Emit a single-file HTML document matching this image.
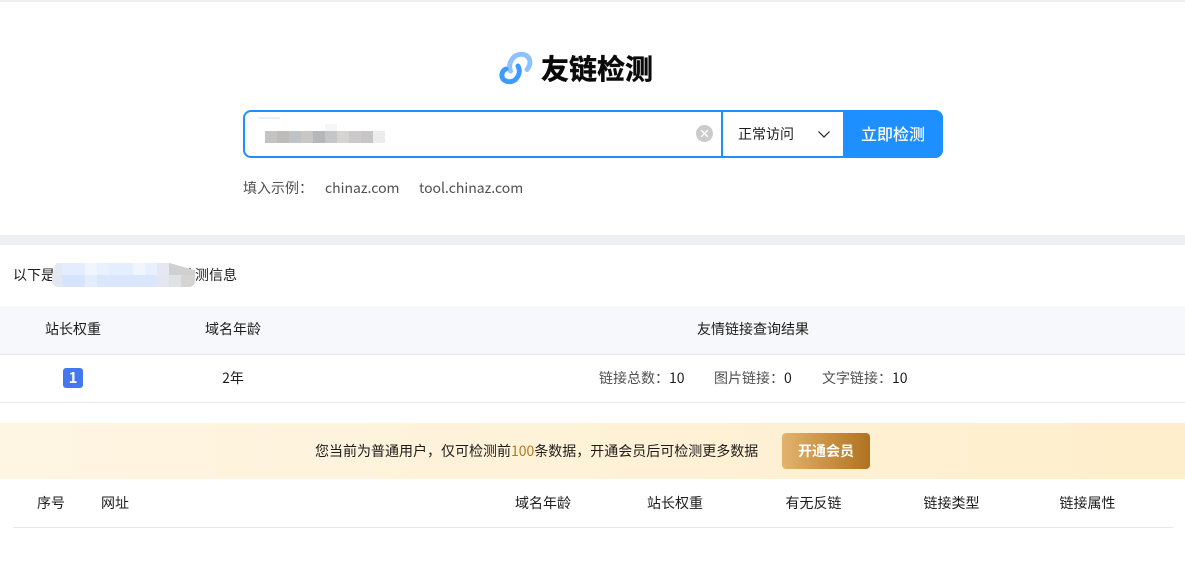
<!DOCTYPE html>
<html lang="zh"><head><meta charset="utf-8"><style>
*{box-sizing:border-box}
html,body{margin:0;padding:0;background:#fff}
body{width:1185px;height:567px;position:relative;overflow:hidden;font-family:"Noto Sans CJK SC","Liberation Sans",sans-serif;font-size:14px;color:#1c1c1c}
.a{position:absolute;white-space:nowrap;line-height:20px}
.c{transform:translateX(-50%)}
.g{color:#505050}
</style></head><body>
<div class="a" style="left:0;top:0;width:1185px;height:2px;background:#eef0f3"></div>

<svg class="a" style="left:498px;top:51px" width="36" height="34" viewBox="0 0 36 34" fill="none" stroke-linecap="round">
<path d="M12.5 20 C10.5 15 12 10 16 6 C20 2.5 26 2.5 29.5 5.5 C33 9 32.500 14 29 18.500" stroke="#8cc2ff" stroke-width="5"/>
<path d="M8 18 C3.500 20 3 25 5 28 C8 31.500 14 31.500 17.500 28.500 C21.500 24 22.500 20 20 15" stroke="#3f9bff" stroke-width="5"/>
</svg>
<div class="a" style="left:541px;top:48px;font-size:28px;line-height:40px;font-weight:700;color:#0a0a0a;-webkit-text-stroke:.5px #0a0a0a">友链检测</div>

<div class="a" style="left:243px;top:110px;width:700px;height:48px;border:2px solid #1e8fff;border-radius:8px;background:#fff"></div>
<div class="a" style="left:843px;top:110px;width:100px;height:48px;background:#1e8fff;border-radius:0 8px 8px 0;color:#fff;font-size:16px;font-weight:500;text-align:center;line-height:47px">立即检测</div>
<div class="a" style="left:721px;top:110px;width:2px;height:48px;background:#1e8fff"></div>
<div class="a" style="left:265px;top:131px;width:108px;height:12px;background:linear-gradient(90deg,#c4c3c2 0 12px,#bdbcba 12px 24px,#c0c3c5 24px 36px,#c9c7c5 36px 48px,#b6b7b9 48px 60px,#c5c6c7 60px 72px,#d5d4d3 72px 84px,#cbc9c9 84px 96px,#c7c6c5 96px 108px)"></div>
<div class="a" style="left:373px;top:131px;width:12px;height:12px;background:#ececec"></div>
<div class="a" style="left:258px;top:117px;width:22px;height:2px;background:#e3f0fd;border-radius:2px"></div>
<div class="a" style="left:325px;top:124px;width:12px;height:7px;background:#f6f6f6"></div>

<svg class="a" style="left:696px;top:125px" width="17" height="17" viewBox="0 0 17 17"><circle cx="8.5" cy="8.5" r="8.5" fill="#cbcbcb"/><path d="M5.5 5.5L11.5 11.5M11.5 5.5L5.5 11.5" stroke="#fff" stroke-width="1.4" stroke-linecap="round"/></svg>
<div class="a" style="left:738px;top:124px">正常访问</div>
<svg class="a" style="left:817px;top:130px" width="14" height="9" viewBox="0 0 14 9"><path d="M1.5 1.5L7 7L12.5 1.5" fill="none" stroke="#222" stroke-width="1.2"/></svg>

<div class="a g" style="left:243px;top:178px">填入示例：</div>
<div class="a g" style="left:325px;top:178px">chinaz.com</div>
<div class="a g" style="left:419px;top:178px">tool.chinaz.com</div>

<div class="a" style="left:0;top:235px;width:1185px;height:10px;background:#eef1f4"></div>

<div class="a" style="left:13px;top:265px">以下是</div>
<div class="a" style="left:181px;top:265px">检测信息</div>
<div class="a" style="left:52px;top:263px;width:143px;height:12px;clip-path:polygon(0 100%,3% 0,82% 0,100% 60%,100% 100%);background:linear-gradient(90deg,#e4e9f2 0 10px,#e4edfd 10px 33px,#f0f5fe 33px 45px,#eaf1fe 45px 57px,#e3eefe 57px 81px,#f1f6fe 81px 93px,#e8f0fd 93px 105px,#e4e8f3 105px 117px,#cfd0d2 117px 143px)"></div>
<div class="a" style="left:52px;top:275px;width:143px;height:12px;border-radius:0 0 6px 6px;background:linear-gradient(90deg,#e2e7f0 0 10px,#d6e4fb 10px 33px,#e3edfd 33px 45px,#d9e6fb 45px 105px,#e4e7f2 105px 117px,#dfe3e3 117px 129px,#d6d4d2 129px 143px)"></div>

<div class="a" style="left:0;top:306px;width:1185px;height:49px;background:#f6f8fb;border-bottom:1px solid #e4e6ea"></div>
<div class="a c" style="left:73px;top:319px">站长权重</div>
<div class="a c" style="left:233px;top:319px">域名年龄</div>
<div class="a c" style="left:753px;top:319px">友情链接查询结果</div>

<div class="a" style="left:63px;top:368px;width:20px;height:20px;background:#4478ee;border-radius:3px;color:#fff;font-weight:700;text-align:center;font-size:15px;line-height:20px">1</div>
<div class="a c" style="left:233px;top:368px">2年</div>
<div class="a g" style="left:599px;top:368px">链接总数：<span style="color:#1c1c1c">10</span></div>
<div class="a g" style="left:714px;top:368px">图片链接：<span style="color:#1c1c1c">0</span></div>
<div class="a g" style="left:822px;top:368px">文字链接：<span style="color:#1c1c1c">10</span></div>
<div class="a" style="left:0;top:402px;width:1185px;height:1px;background:#e8e8e8"></div>

<div class="a" style="left:0;top:423px;width:1185px;height:56px;background:linear-gradient(90deg,#fef5e3,#feeecb)"></div>
<div class="a" style="left:315px;top:441px">您当前为普通用户，仅可检测前<span style="color:#b5771e">100</span>条数据，开通会员后可检测更多数据</div>
<div class="a" style="left:782px;top:433px;width:88px;height:36px;border-radius:4px;background:linear-gradient(90deg,#e3b36f,#b0721f);color:#fff;font-weight:700;text-align:center;line-height:36px">开通会员</div>

<div class="a c" style="left:51px;top:493px">序号</div>
<div class="a" style="left:101px;top:493px">网址</div>
<div class="a c" style="left:543px;top:493px">域名年龄</div>
<div class="a c" style="left:675px;top:493px">站长权重</div>
<div class="a c" style="left:813.500px;top:493px">有无反链</div>
<div class="a c" style="left:951.500px;top:493px">链接类型</div>
<div class="a c" style="left:1087.500px;top:493px">链接属性</div>
<div class="a" style="left:13px;top:527px;width:1160px;height:1px;background:#e8e8e8"></div>
</body></html>
